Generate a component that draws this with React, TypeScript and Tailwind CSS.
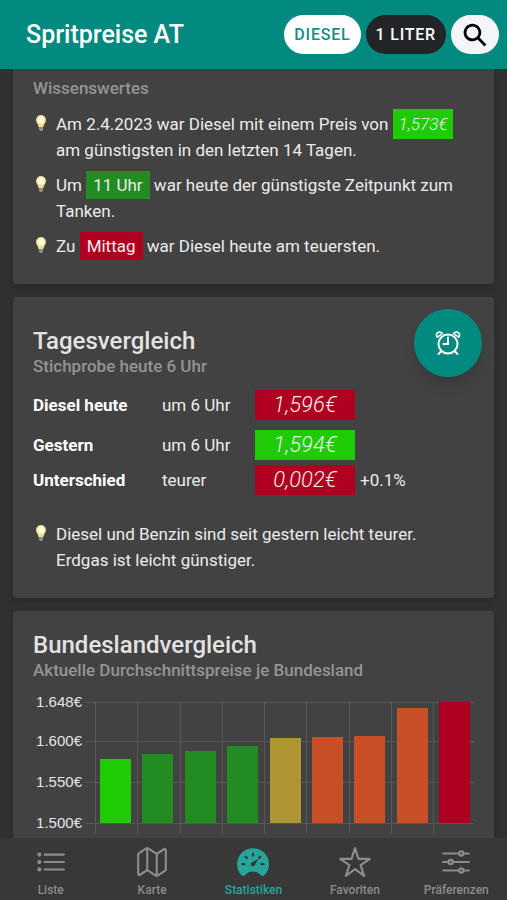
import type { ReactNode } from 'react';
import {
    IoListOutline,
    IoMapOutline,
    IoOptionsOutline,
    IoSearchSharp,
    IoSpeedometer,
    IoStarOutline,
} from 'react-icons/io5';

const tabs = [
    { label: 'Liste', icon: IoListOutline },
    { label: 'Karte', icon: IoMapOutline },
    { label: 'Statistiken', icon: IoSpeedometer, active: true },
    { label: 'Favoriten', icon: IoStarOutline },
    { label: 'Präferenzen', icon: IoOptionsOutline },
];

const comparison = [
    { label: 'Diesel heute', when: 'um 6 Uhr', price: '1,596€', color: 'bg-[#b00020]', height: 'h-10' },
    { label: 'Gestern', when: 'um 6 Uhr', price: '1,594€', color: 'bg-[#1ecb05]', height: 'h-10' },
    { label: 'Unterschied', when: 'teurer', price: '0,002€', color: 'bg-[#b00020]', height: 'h-[30px]', diff: '+0.1%' },
];

const bars = [
    { height: 64, color: '#1ecb05' },
    { height: 69, color: '#228b22' },
    { height: 72, color: '#228b22' },
    { height: 77, color: '#228b22' },
    { height: 85, color: '#b09633' },
    { height: 86, color: '#c94f26' },
    { height: 87, color: '#c94f26' },
    { height: 115, color: '#c94f26' },
    { height: 121, color: '#b00020' },
];

const ticks = [
    { label: '1.648€', y: 10 },
    { label: '1.600€', y: 49 },
    { label: '1.550€', y: 90 },
    { label: '1.500€', y: 131 },
];

function Bulb() {
    return (
        <svg viewBox="0 0 10 16" className="mt-1 ml-[3px] h-4 w-[10px] shrink-0" aria-hidden="true">
            <path d="M3 11h4v3.500L6 16H4l-1-1.500z" fill="#8f9092" />
            <path d="M5 0a5 5 0 0 0-5 5c0 2.600 2 3.600 2.600 7h4.800C8 8.600 10 7.600 10 5a5 5 0 0 0-5-5z" fill="#f0dc8c" />
            <ellipse cx="5" cy="5" rx="3.500" ry="3.800" fill="#fffbe0" />
        </svg>
    );
}

function AlarmIcon() {
    return (
        <svg viewBox="0 0 28 28" className="size-7" fill="none" stroke="currentColor" strokeWidth="2" strokeLinecap="round" aria-hidden="true">
            <circle cx="14" cy="15" r="9.500" />
            <path d="M14 8.500V15H9.500M7.500 22l-3 3M20.500 22l3 3" />
            <path d="M3.300 8.200C1.800 6.300 2.300 3.800 4.500 3.200c1.500-.4 3 .1 3.900 1.200L3.300 8.200zM24.700 8.200c1.500-1.900 1-4.400-1.200-5-1.500-.4-3 .1-3.900 1.200l5.100 3.800z" strokeWidth="1.600" strokeLinejoin="round" />
        </svg>
    );
}

function Tip({ children }: { children: ReactNode }) {
    return (
        <li className="flex gap-[10px]">
            <Bulb />
            <p>{children}</p>
        </li>
    );
}

function CardTitle({ title, subtitle }: { title: string; subtitle: string }) {
    return (
        <>
            <h2 className="text-2xl leading-8 font-medium text-[#e2e2e2]">{title}</h2>
            <h3 className="text-[17px] leading-[18px] font-medium text-[#949494]">{subtitle}</h3>
        </>
    );
}

function PriceChart() {
    return (
        <svg viewBox="0 0 441 170" className="mt-[13px] block w-full" role="img" aria-label="Durchschnittspreise">
            {ticks.map((t) => (
                <g key={t.label}>
                    <path d={`M52 ${t.y}.5H442`} stroke="#565656" />
                    <text x="49" y={t.y + 5} textAnchor="end" fontSize="15" fill="#e6e6e6" className="font-['Liberation_Sans',sans-serif]">
                        {t.label}
                    </text>
                </g>
            ))}
            {bars.map((b, i) => (
                <g key={i}>
                    <path d={`M${62 + Math.round(i * 42.25)}.5 10V141`} stroke="#585858" />
                    <rect x={67 + Math.round(i * 42.4)} y={131 - b.height} width="31" height={b.height} fill={b.color} />
                </g>
            ))}
        </svg>
    );
}

export default function App() {
    return (
        <div className="flex h-screen flex-col bg-[#303030] font-[Roboto,sans-serif] text-[17px] leading-[26px] text-[#ececec]">
            <header className="flex h-[69px] shrink-0 items-center gap-[5px] bg-[#028a80] pr-2 pl-[26px]">
                <h1 className="flex-1 text-[25px] font-medium text-white">Spritpreise AT</h1>
                <button className="h-[39px] rounded-full bg-white px-[10px] text-base font-medium tracking-wider text-[#158f85]">
                    DIESEL
                </button>
                <button className="h-[39px] rounded-full bg-[#222428] px-[10px] text-base font-medium tracking-wider text-white">
                    1 LITER
                </button>
                <button aria-label="Suche" className="flex h-[39px] w-12 items-center justify-center rounded-full bg-[#f4f5f8] text-black">
                    <IoSearchSharp size={28} />
                </button>
            </header>

            <main className="flex-1 space-y-[13px] overflow-y-auto px-[13px] [scrollbar-width:none]">
                <section className="rounded-b bg-[#424242] px-5 pt-[7px] pb-[25px] shadow-md">
                    <h3 className="mb-[11px] leading-6 font-medium text-[#949494]">Wissenswertes</h3>
                    <ul className="space-y-[9px]">
                        <Tip>
                            Am 2.4.2023 war Diesel mit einem Preis von{' '}
                            <span className="bg-[#1ecb05] px-[6px] py-[5px] font-light italic">1,573€</span> am günstigsten in
                            den letzten 14 Tagen.
                        </Tip>
                        <Tip>
                            Um <span className="bg-[#228b22] px-[7px] py-1">11 Uhr</span> war heute der günstigste Zeitpunkt
                            zum Tanken.
                        </Tip>
                        <Tip>
                            Zu <span className="bg-[#b00020] px-[7px] py-1">Mittag</span> war Diesel heute am teuersten.
                        </Tip>
                    </ul>
                </section>

                <section className="relative rounded bg-[#424242] px-5 pt-7 pb-[25px] shadow-md">
                    <CardTitle title="Tagesvergleich" subtitle="Stichprobe heute 6 Uhr" />
                    <button
                        aria-label="Preisalarm"
                        className="absolute top-3 right-3 flex size-[68px] items-center justify-center rounded-full bg-[#028a80] text-white shadow-lg"
                    >
                        <AlarmIcon />
                    </button>
                    <table className="mt-[10px] mb-[26px] w-full border-collapse">
                        <tbody>
                            {comparison.map((row) => (
                                <tr key={row.label} className={row.height}>
                                    <th className="w-[129px] p-0 text-left font-bold text-white">{row.label}</th>
                                    <td className="w-[93px] p-0">{row.when}</td>
                                    <td className="w-[100px] p-0">
                                        <span className={`block text-center text-[22px] leading-[30px] font-light italic ${row.color}`}>
                                            {row.price}
                                        </span>
                                    </td>
                                    <td className="p-0 pl-[5px]">{row.diff}</td>
                                </tr>
                            ))}
                        </tbody>
                    </table>
                    <ul>
                        <Tip>
                            Diesel und Benzin sind seit gestern leicht teurer.
                            <br />
                            Erdgas ist leicht günstiger.
                        </Tip>
                    </ul>
                </section>

                <section className="rounded bg-[#424242] px-5 pt-[18px] shadow-md">
                    <CardTitle title="Bundeslandvergleich" subtitle="Aktuelle Durchschnittspreise je Bundesland" />
                    <PriceChart />
                </section>
            </main>

            <nav className="grid h-[62px] shrink-0 grid-cols-5 bg-[#383838]">
                {tabs.map(({ label, icon: Icon, active }) => (
                    <a
                        key={label}
                        href="#"
                        className={`flex flex-col items-center pt-[7px] text-xs leading-[22px] font-medium ${active ? 'text-[#26a69a]' : 'text-[#8c8c8c]'}`}
                    >
                        <Icon size={34} />
                        {label}
                    </a>
                ))}
            </nav>
        </div>
    );
}
